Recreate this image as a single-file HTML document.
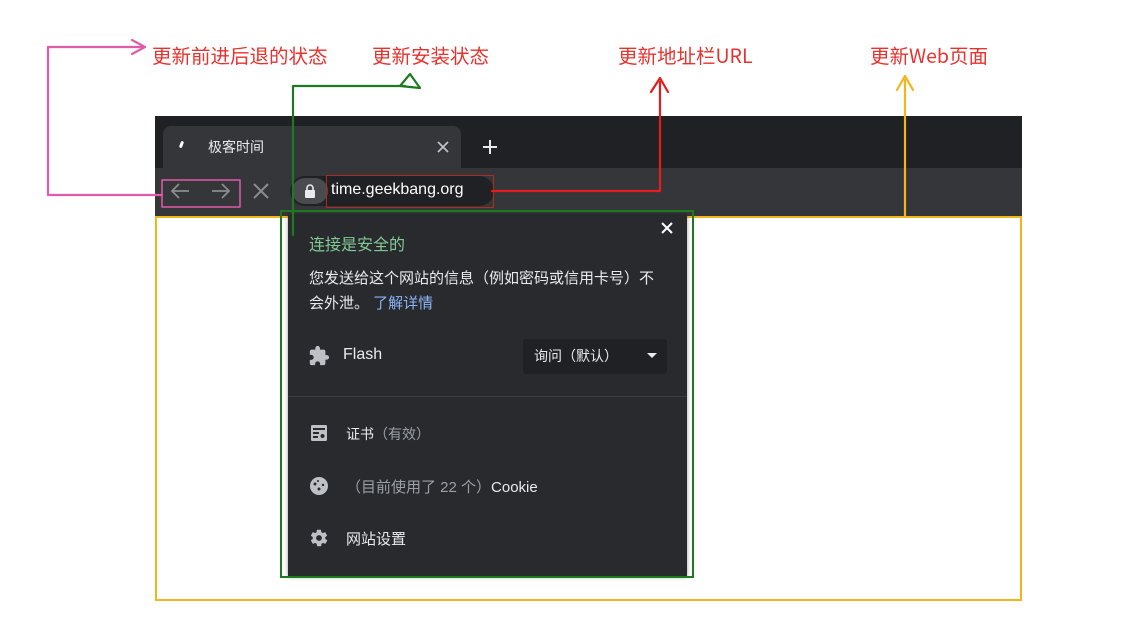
<!DOCTYPE html>
<html><head><meta charset="utf-8"><style>
*{margin:0;padding:0;box-sizing:border-box}
body{width:1142px;height:633px;background:#fff;position:relative;overflow:hidden;font-family:"Liberation Sans","Noto Sans CJK SC",sans-serif}
.a{position:absolute}
.lab{position:absolute;color:#e8322e;font-size:19.5px;top:40px;font-family:"Noto Sans CJK SC",sans-serif;font-weight:400}
.t{color:#e8eaed;font-size:14px}
</style></head><body>
<div class="lab" style="left:152px">更新前进后退的状态</div>
<div class="lab" style="left:372px">更新安装状态</div>
<div class="lab" style="left:618px">更新地址栏URL</div>
<div class="lab" style="left:870px">更新Web页面</div>

<div class="a" style="left:155px;top:116px;width:867px;height:100px;background:#202124"></div>
<div class="a" style="left:163px;top:126px;width:298px;height:44px;background:#35363a;border-radius:8px 8px 0 0"></div>
<div class="a" style="left:155px;top:168px;width:867px;height:48px;background:#35363a"></div>
<div class="a" style="left:180px;top:141px;width:3px;height:7px;background:#fff;border-radius:2px;transform:rotate(20deg)"></div>
<div class="a t" style="left:208px;top:137px">极客时间</div>
<svg class="a" style="left:437px;top:141px" width="12" height="12"><path d="M1 1L11 11M11 1L1 11" stroke="#bdc1c6" stroke-width="1.8"/></svg>
<svg class="a" style="left:482px;top:139px" width="16" height="16"><path d="M8 1V15M1 8H15" stroke="#e8eaed" stroke-width="2"/></svg>
<svg class="a" style="left:170px;top:182px" width="20" height="18" fill="none" stroke="#8a8c90" stroke-width="1.8"><path d="M19 9H2M9 2L2 9L9 16"/></svg>
<svg class="a" style="left:211px;top:182px" width="20" height="18" fill="none" stroke="#8a8c90" stroke-width="1.8"><path d="M1 9H18M11 2L18 9L11 16"/></svg>
<svg class="a" style="left:253px;top:183px" width="16" height="16"><path d="M1 1L15 15M15 1L1 15" stroke="#8a8c90" stroke-width="2"/></svg>
<div class="a" style="left:290px;top:176px;width:204px;height:30px;border-radius:15px;background:#202124"></div>
<div class="a" style="left:292px;top:178px;width:36px;height:26px;border-radius:13px;background:#4a4b4f"></div>
<svg class="a" style="left:303px;top:183px" width="14" height="16"><rect x="2" y="7" width="10" height="8" rx="1" fill="#e8eaed"/><path d="M4 7V5a3 3 0 0 1 6 0v2" stroke="#e8eaed" stroke-width="1.6" fill="none"/></svg>
<div class="a" style="left:331px;top:181px;color:#fff;font-size:16px">time.geekbang.org</div>
<div class="a" style="left:326px;top:175px;width:168px;height:33px;border:1.5px solid #b02a22"></div>

<div class="a" style="left:155px;top:216px;width:867px;height:385px;border:2px solid #f2b51c"></div>

<div class="a" style="left:288px;top:214px;width:399px;height:362px;background:#292a2d;box-shadow:0 1px 4px rgba(0,0,0,.4)"></div>
<svg class="a" style="left:661px;top:222px" width="12" height="12"><path d="M1 1L11 11M11 1L1 11" stroke="#fff" stroke-width="2"/></svg>
<div class="a" style="left:309px;top:231px;color:#81c995;font-size:16px">连接是安全的</div>
<div class="a t" style="left:309px;top:266px;line-height:25px;width:358px;font-size:15px">您发送给这个网站的信息（例如密码或信用卡号）不会外泄。 <span style="color:#8ab4f8">了解详情</span></div>
<svg class="a" style="left:308px;top:345px" width="22" height="22" viewBox="0 0 24 24"><path fill="#bdc1c6" d="M20.5 11H19V7c0-1.1-.9-2-2-2h-4V3.5a2.5 2.5 0 0 0-5 0V5H4c-1.1 0-2 .9-2 2v3.8h1.5c1.5 0 2.7 1.2 2.7 2.7S5 16.2 3.5 16.2H2V20c0 1.1.9 2 2 2h3.8v-1.5c0-1.5 1.2-2.7 2.7-2.7s2.7 1.2 2.7 2.7V22H17c1.1 0 2-.9 2-2v-4h1.5a2.5 2.5 0 0 0 0-5z"/></svg>
<div class="a t" style="left:343px;top:346px;font-size:16px">Flash</div>
<div class="a" style="left:523px;top:339px;width:144px;height:35px;background:#202124;border-radius:3px"></div>
<div class="a t" style="left:534px;top:346px;font-size:14px">询问（默认）</div>
<div class="a" style="left:647px;top:353px;width:0;height:0;border-left:5px solid transparent;border-right:5px solid transparent;border-top:5px solid #e8eaed"></div>
<div class="a" style="left:288px;top:396px;width:399px;height:1px;background:#3c3d40"></div>
<svg class="a" style="left:310px;top:424px" width="18" height="18"><rect x="1" y="1" width="16" height="16" rx="1.5" fill="#bdc1c6"/><rect x="3" y="4" width="12" height="2" fill="#292a2d"/><rect x="3" y="8" width="6" height="2" fill="#292a2d"/><rect x="3" y="12" width="5" height="2" fill="#292a2d"/><circle cx="12.5" cy="12" r="2" fill="#292a2d"/></svg>
<div class="a t" style="left:346px;top:424px;font-size:14px">证书<span style="color:#9aa0a6">（有效）</span></div>
<svg class="a" style="left:309px;top:476px" width="20" height="20"><circle cx="10" cy="10" r="9" fill="#bdc1c6"/><circle cx="6" cy="8" r="1.5" fill="#292a2d"/><circle cx="10" cy="13" r="1.5" fill="#292a2d"/><circle cx="14" cy="9" r="1.2" fill="#292a2d"/><circle cx="9" cy="5" r="1" fill="#292a2d"/></svg>
<div class="a t" style="left:346px;top:476px;font-size:15px"><span style="color:#9aa0a6">（目前使用了 22 个）</span>Cookie</div>
<svg class="a" style="left:309px;top:528px" width="20" height="20" viewBox="0 0 24 24"><path fill="#bdc1c6" d="M19.4 13c0-.3.1-.7.1-1s0-.7-.1-1l2.1-1.6c.2-.2.2-.4.1-.6l-2-3.5c-.1-.2-.4-.3-.6-.2l-2.5 1c-.5-.4-1.1-.7-1.7-1l-.4-2.6c0-.2-.2-.4-.5-.4h-4c-.2 0-.5.2-.5.4l-.4 2.700c-.6.2-1.1.6-1.7 1L5 5.1c-.2-.1-.5 0-.6.2l-2 3.5c-.1.2-.1.5.1.6L4.6 11c0 .3-.1.7-.1 1s0 .7.1 1l-2.1 1.6c-.2.2-.2.4-.1.6l2 3.5c.1.2.4.3.6.2l2.5-1c.5.4 1.1.7 1.7 1l.4 2.6c0 .2.2.4.5.4h4c.2 0 .5-.2.5-.4l.4-2.6c.6-.3 1.2-.6 1.7-1l2.5 1c.2.1.5 0 .6-.2l2-3.5c.1-.2.1-.5-.1-.6L19.4 13zM12 15.5a3.5 3.5 0 1 1 0-7 3.5 3.5 0 0 1 0 7z"/></svg>
<div class="a t" style="left:346px;top:528px;font-size:15px">网站设置</div>

<div class="a" style="left:280px;top:210px;width:414px;height:368px;border:2px solid #1e7a1e"></div>

<svg class="a" style="left:0;top:0" width="1142" height="633" fill="none" stroke-width="2.2" stroke-linecap="round" stroke-linejoin="round">
<path d="M162 180H240V207H162Z" stroke="#e05ba8" stroke-width="1.5"/>
<path d="M162 195H48V47H142M132 40L145 47L132 54" stroke="#e05ba8"/>
<path d="M293 235V86H405M400 86L410 74L420 88L400 86" stroke="#1e7a1e"/>
<path d="M492 191H660V82M651 92L660 78L668 92" stroke="#e41c1c"/>
<path d="M905 216V80M897 90L905 76L913 90" stroke="#f2b51c"/>
</svg>
</body></html>
